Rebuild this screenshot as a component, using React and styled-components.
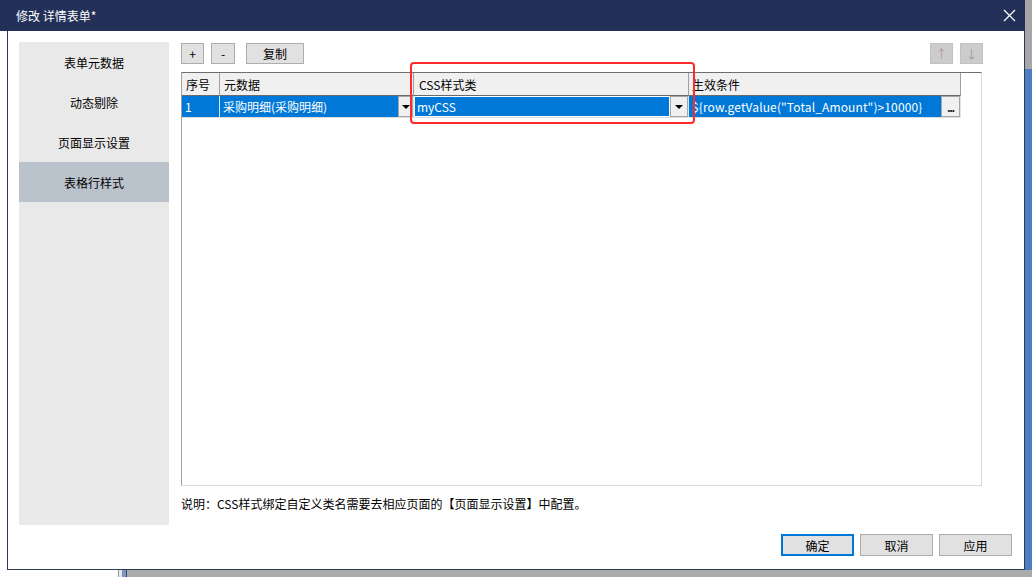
import React from "react";
import styled, { createGlobalStyle } from "styled-components";

const GlobalStyle = createGlobalStyle`
  html, body {
    margin: 0;
    padding: 0;
    background: #ffffff;
    overflow: hidden;
  }
  * {
    box-sizing: border-box;
  }
  body {
    font-family: "Noto Sans CJK SC", "Noto Sans", sans-serif;
    font-size: 12px;
    color: #000;
  }
`;

const Screen = styled.div`
  width: 1032px;
  height: 577px;
  display: flex;
  flex-direction: column;
`;

const TopArea = styled.div`
  display: flex;
  height: 570px;
`;

const Dialog = styled.div`
  width: 1025px;
  display: flex;
  flex-direction: column;
`;

const TitleBar = styled.div`
  height: 31px;
  background: #233159;
  color: #fff;
  display: flex;
  align-items: center;
  justify-content: space-between;
  padding: 0 8px 1px 16px;
  font-size: 12px;
`;

const CloseBtn = styled.div`
  width: 16px;
  height: 16px;
  display: flex;
  align-items: center;
  justify-content: center;
`;

const Body = styled.div`
  flex: 1;
  margin-left: 7px;
  border-left: 1px solid #2f3a55;
  border-right: 1px solid #2f3a55;
  border-bottom: 1px solid #2f3a55;
  padding: 11px 12px 0 11px;
  display: flex;
  flex-direction: column;
`;

const Content = styled.div`
  display: flex;
  height: 483px;
  gap: 12px;
`;

const Sidebar = styled.div`
  width: 150px;
  background: #e9e9e9;
  display: flex;
  flex-direction: column;
`;

const NavItem = styled.div`
  height: 40px;
  display: flex;
  align-items: center;
  justify-content: center;
  background: ${(p) => (p.active ? "#bac2cb" : "transparent")};
`;

const Main = styled.div`
  width: 802px;
  display: flex;
  flex-direction: column;
`;

const Toolbar = styled.div`
  display: flex;
  align-items: center;
  margin-top: 1px;
  height: 21px;
`;

const ToolButton = styled.div`
  width: ${(p) => p.w}px;
  height: 21px;
  margin-right: ${(p) => p.mr || 0}px;
  background: #e1e1e1;
  border: 1px solid #adadad;
  display: flex;
  align-items: center;
  justify-content: center;
  padding-bottom: 1px;
`;

const Spacer = styled.div`
  flex: 1;
`;

const ArrowButton = styled.div`
  width: 23px;
  height: 21px;
  margin-left: ${(p) => p.ml || 0}px;
  background: #cccccc;
  border: 1px solid #c2c2c2;
  color: #b0979a;
  display: flex;
  align-items: center;
  justify-content: center;
  font-size: 12px;
`;

const GridWrap = styled.div`
  position: relative;
  margin-top: 8px;
  height: 414px;
  width: 801px;
  border-top: 1px solid #6e6e6e;
  border-left: 1px solid #a0a0a0;
  border-right: 1px solid #dadada;
  border-bottom: 1px solid #dadada;
  background: #fff;
`;

const Row = styled.div`
  display: flex;
  height: ${(p) => p.h}px;
`;

const HeadCell = styled.div`
  width: ${(p) => p.w}px;
  height: 100%;
  background: #f0f0f0;
  border-right: 1px solid #a0a0a0;
  border-bottom: 1px solid #6a6a6a;
  display: flex;
  align-items: center;
  padding-left: ${(p) => p.pl ?? 4}px;
`;

const Cell = styled.div`
  width: ${(p) => p.w}px;
  height: 100%;
  background: #0078d7;
  color: #fff;
  border-right: 1px solid #d8e6f3;
  border-bottom: 1px solid #dcdcdc;
  display: flex;
  align-items: center;
  padding-left: ${(p) => p.pl ?? 3}px;
  white-space: nowrap;
  overflow: hidden;
`;

const CellText = styled.div`
  flex: 1;
  overflow: hidden;
  letter-spacing: ${(p) => p.ls || 0}px;
`;

const EditBox = styled.div`
  flex: 1;
  height: 100%;
  border: 1px solid #ffffff;
  display: flex;
  align-items: center;
  padding-left: 2px;
`;

const DropButton = styled.div`
  width: ${(p) => p.w || 15}px;
  height: 100%;
  background: #f0f0f0;
  border: 1px solid #a6a6a6;
  display: flex;
  align-items: center;
  justify-content: center;
  color: #000;
`;

const Triangle = styled.div`
  width: 0;
  height: 0;
  border-left: 4px solid transparent;
  border-right: 4px solid transparent;
  border-top: 4px solid #000;
`;

const Dots = styled.div`
  font-size: 10px;
  line-height: 1;
  letter-spacing: -1px;
  margin-top: 3px;
  font-weight: bold;
`;

const Highlight = styled.div`
  position: absolute;
  left: 228px;
  top: -11px;
  width: 285px;
  height: 62px;
  border: 2px solid #ff2b2b;
  border-radius: 4px;
  pointer-events: none;
`;

const Note = styled.div`
  margin-top: 10px;
  font-size: 12px;
  line-height: 16px;
`;

const Footer = styled.div`
  display: flex;
  justify-content: flex-end;
  margin-top: 9px;
  gap: 6px;
`;

const DialogButton = styled.div`
  width: 73px;
  height: 22px;
  background: #e1e1e1;
  border: ${(p) => (p.primary ? "2px solid #0078d7" : "1px solid #adadad")};
  display: flex;
  align-items: center;
  justify-content: center;
  font-size: 12px;
`;

const RightStrip = styled.div`
  flex: 1;
  display: flex;
  flex-direction: column;
`;

const StripPart = styled.div`
  height: ${(p) => (p.h ? `${p.h}px` : "auto")};
  flex: ${(p) => (p.h ? "none" : 1)};
  background: ${(p) => p.bg};
`;

const BottomStrip = styled.div`
  flex: 1;
  display: flex;
`;

const Seg = styled.div`
  width: ${(p) => (p.w ? `${p.w}px` : "auto")};
  flex: ${(p) => (p.w ? "none" : 1)};
  background: ${(p) => p.bg};
`;

const navItems = ["表单元数据", "动态剔除", "页面显示设置", "表格行样式"];

export default function App() {
  return (
    <>
      <GlobalStyle />
      <Screen>
        <TopArea>
          <Dialog>
            <TitleBar>
              <span>修改 详情表单*</span>
              <CloseBtn>
                <svg width="13" height="13" viewBox="0 0 13 13">
                  <path d="M1 1 L12 12 M12 1 L1 12" stroke="#fff" strokeWidth="1.2" />
                </svg>
              </CloseBtn>
            </TitleBar>
            <Body>
              <Content>
                <Sidebar>
                  {navItems.map((t, i) => (
                    <NavItem key={t} active={i === 3}>
                      {t}
                    </NavItem>
                  ))}
                </Sidebar>
                <Main>
                  <Toolbar>
                    <ToolButton w={23} mr={7}>+</ToolButton>
                    <ToolButton w={24} mr={11}>-</ToolButton>
                    <ToolButton w={58}>复制</ToolButton>
                    <Spacer />
                    <ArrowButton>↑</ArrowButton>
                    <ArrowButton ml={7}>↓</ArrowButton>
                  </Toolbar>
                  <GridWrap>
                    <Row h={23}>
                      <HeadCell w={38} pl={4}>序号</HeadCell>
                      <HeadCell w={194}>元数据</HeadCell>
                      <HeadCell w={275} pl={5}>CSS样式类</HeadCell>
                      <HeadCell w={272} pl={3}>生效条件</HeadCell>
                    </Row>
                    <Row h={22}>
                      <Cell w={38}>1</Cell>
                      <Cell w={194} pl={3}>
                        <CellText>采购明细(采购明细)</CellText>
                        <DropButton>
                          <Triangle />
                        </DropButton>
                      </Cell>
                      <Cell w={275} pl={0}>
                        <EditBox>myCSS</EditBox>
                        <DropButton w={18}>
                          <Triangle />
                        </DropButton>
                      </Cell>
                      <Cell w={272} pl={3}>
                        <CellText ls={0.12}>{'${row.getValue("Total_Amount")>10000}'}</CellText>
                        <DropButton w={19}>
                          <Dots>...</Dots>
                        </DropButton>
                      </Cell>
                    </Row>
                    <Highlight />
                  </GridWrap>
                  <Note>说明：CSS样式绑定自定义类名需要去相应页面的【页面显示设置】中配置。</Note>
                </Main>
              </Content>
              <Footer>
                <DialogButton primary>确定</DialogButton>
                <DialogButton>取消</DialogButton>
                <DialogButton>应用</DialogButton>
              </Footer>
            </Body>
          </Dialog>
          <RightStrip>
            <StripPart h={69} bg="#a6a6a6" />
            <StripPart bg="#4f7dc1" />
          </RightStrip>
        </TopArea>
        <BottomStrip>
          <Seg w={118} bg="#ffffff" />
          <Seg w={1} bg="#9a9a9a" />
          <Seg w={3} bg="#e8e8e8" />
          <Seg w={1} bg="#8a8a8a" />
          <Seg w={3} bg="#6f9ad6" />
          <Seg w={1} bg="#3c4a66" />
          <Seg bg="#ababab" />
        </BottomStrip>
      </Screen>
    </>
  );
}
